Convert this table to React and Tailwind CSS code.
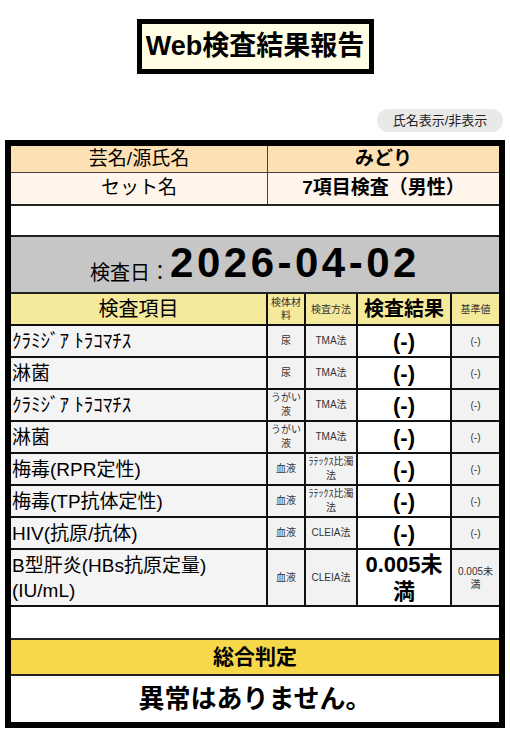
const rows = [
  { item: "ｸﾗﾐｼﾞｱ ﾄﾗｺﾏﾁｽ", spec: "尿", method: "TMA法" },
  { item: "淋菌", spec: "尿", method: "TMA法" },
  { item: "ｸﾗﾐｼﾞｱ ﾄﾗｺﾏﾁｽ", spec: "うがい液", method: "TMA法" },
  { item: "淋菌", spec: "うがい液", method: "TMA法" },
  { item: "梅毒(RPR定性)", spec: "血液", method: "ﾗﾃｯｸｽ比濁法" },
  { item: "梅毒(TP抗体定性)", spec: "血液", method: "ﾗﾃｯｸｽ比濁法" },
  { item: "HIV(抗原/抗体)", spec: "血液", method: "CLEIA法" },
];

function DataRow({ item, spec, method, result = "(-)", ref = "(-)", tall }) {
  return (
    <div className={`flex border-b-2 border-[#111] ${tall ? "h-[57px]" : "h-[32px]"}`}>
      <div className="flex w-[257px] items-center border-r-2 border-[#111] bg-[#f4f4f4] pl-[1px] text-[19px] leading-[25px]">
        {item}
      </div>
      <div className="flex w-[38px] items-center justify-center border-r-2 border-[#111] bg-[#f2f2f2] px-[1px] text-center text-[10px] leading-[14px] text-[#333]">
        {spec}
      </div>
      <div className="flex w-[52px] items-center justify-center border-r-2 border-[#111] bg-[#f2f2f2] px-[1px] text-center text-[10px] leading-[14px] text-[#333]">
        {method}
      </div>
      <div className="flex w-[94px] items-center justify-center border-r-2 border-[#111] bg-white text-center text-[22px] font-bold leading-[27px]">
        {result}
      </div>
      <div className="flex flex-1 items-center justify-center bg-[#f2f2f2] px-[2px] text-center text-[10px] leading-[13px] text-[#333]">
        {ref}
      </div>
    </div>
  );
}

export default function App() {
  return (
    <div className="min-h-[744px] w-[510px] bg-white font-['Liberation_Sans','Noto_Sans_CJK_JP',sans-serif] text-black">
      <div className="flex justify-center pt-[19px]">
        <h1 className="flex h-[55px] w-[237px] items-center justify-center border-[5px] border-black bg-[#fffde3] text-[27px] font-bold">
          Web検査結果報告
        </h1>
      </div>

      <div className="mt-[35px] flex justify-end pr-[7px]">
        <button className="h-[23px] w-[126px] rounded-full bg-[#e9e9e9] text-[13px] text-[#222]">
          氏名表示/非表示
        </button>
      </div>

      <div className="mx-[5px] mt-[8px] border-[6px] border-black">
        <div className="flex h-[27px] border-b border-[#444] bg-[#fde1b4] text-[19px]">
          <div className="flex w-[257px] items-center justify-center border-r border-[#444]">芸名/源氏名</div>
          <div className="flex flex-1 items-center justify-center font-bold">みどり</div>
        </div>
        <div className="flex h-[33px] border-b-2 border-[#222] bg-[#fff5ea] text-[19px]">
          <div className="flex w-[257px] items-center justify-center border-r border-[#444]">セット名</div>
          <div className="flex flex-1 items-center justify-center font-bold">7項目検査（男性）</div>
        </div>
        <div className="h-[31px] border-b-2 border-[#222] bg-white"></div>

        <div className="flex h-[57px] items-end justify-center border-b-2 border-[#222] bg-[#c6c6c6] pb-[5px]">
          <span className="text-[20px] leading-[28px]">検査日：</span>
          <span className="text-[42px] font-bold leading-[48px] tracking-[3.5px]">2026-04-02</span>
        </div>

        <div className="flex h-[32px] border-b-2 border-[#111] bg-[#f5e99b]">
          <div className="flex w-[257px] items-center justify-center border-r-2 border-[#111] text-[20px]">検査項目</div>
          <div className="flex w-[38px] items-center justify-center border-r-2 border-[#111] px-[1px] text-center text-[10px] leading-[13px] text-[#333]">
            検体材料
          </div>
          <div className="flex w-[52px] items-center justify-center border-r-2 border-[#111] text-[10px] text-[#333]">検査方法</div>
          <div className="flex w-[94px] items-center justify-center border-r-2 border-[#111] text-[20px] font-bold">検査結果</div>
          <div className="flex flex-1 items-center justify-center text-[10px] text-[#333]">基準値</div>
        </div>

        {rows.map((r, i) => (
          <DataRow key={i} {...r} />
        ))}
        <DataRow
          item={
            <span>
              B型肝炎(HBs抗原定量)
              <br />
              (IU/mL)
            </span>
          }
          spec="血液"
          method="CLEIA法"
          result="0.005未満"
          ref="0.005未満"
          tall
        />

        <div className="h-[33px] border-b-2 border-[#222] bg-white"></div>
        <div className="flex h-[36px] items-center justify-center border-b-2 border-[#222] bg-[#f8d84b] text-[21px] font-bold">
          総合判定
        </div>
        <div className="flex h-[46px] items-center justify-center bg-white text-[26px] font-bold">
          異常はありません。
        </div>
      </div>
    </div>
  );
}
